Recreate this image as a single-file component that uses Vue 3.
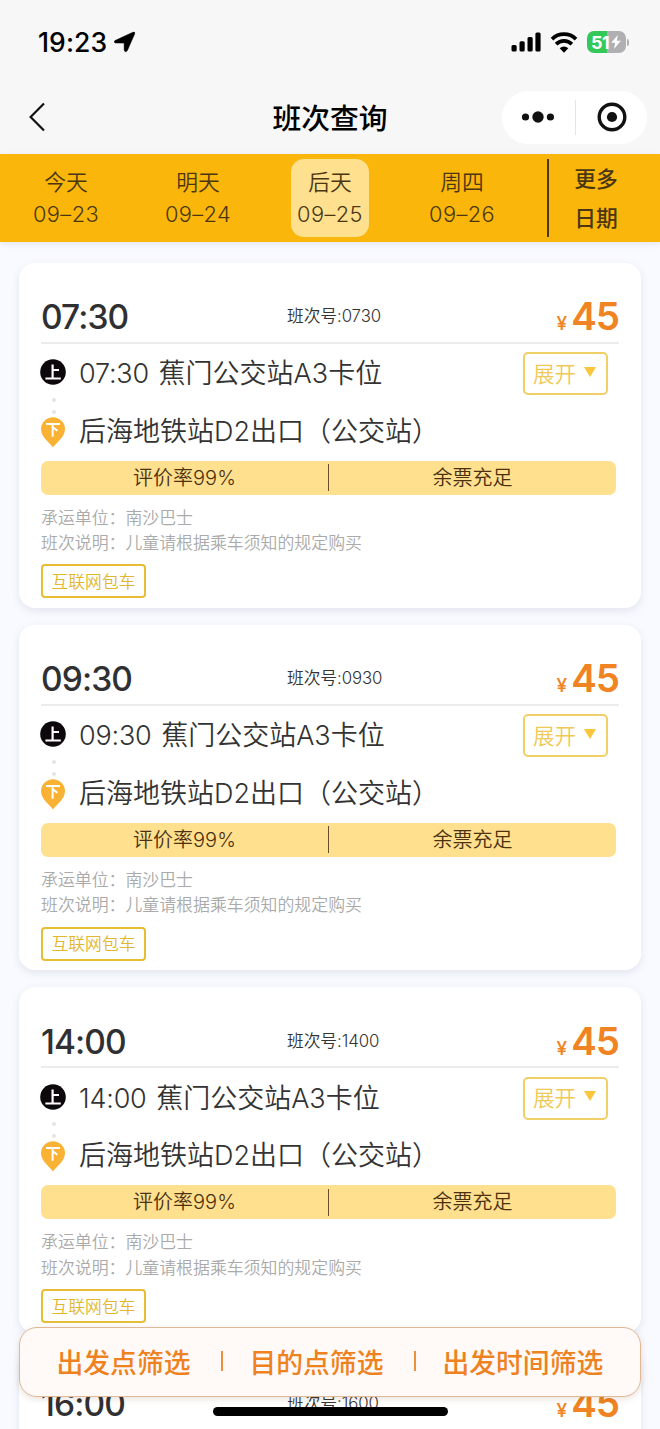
<script setup>
const days = [
  { name: '今天', date: '09–23' },
  { name: '明天', date: '09–24' },
  { name: '后天', date: '09–25', active: true },
  { name: '周四', date: '09–26' },
]
const trips = [
  { time: '07:30', no: '0730', details: true },
  { time: '09:30', no: '0930', details: true },
  { time: '14:00', no: '1400', details: true },
  { time: '16:00', no: '1600', details: false },
]
</script>

<template>
  <div class="screen">
    <header class="top">
      <div class="status">
        <span class="clock">19:23</span>
        <svg class="loc" width="22" height="22" viewBox="0 0 22 22">
          <path d="M1 9.6 18.8 1.3Q21.6.4 20.6 3.1L13.4 19.4Q11.6 22 10.2 19.4L10.1 12.5Q10.1 12.1 9.7 12.1L1.6 12Q-1 11 1 9.6Z" fill="#000" stroke="#000" stroke-width="0.5" />
        </svg>
        <svg class="signal" width="30" height="20" viewBox="0 0 30 20">
          <rect x="0.5" y="13" width="5.2" height="6.5" rx="1.5" />
          <rect x="8.5" y="9.3" width="5.2" height="10.2" rx="1.5" />
          <rect x="16.5" y="5" width="5.2" height="14.5" rx="1.5" />
          <rect x="24.4" y="0.5" width="5.2" height="19" rx="1.5" />
        </svg>
        <svg class="wifi" width="28" height="21" viewBox="0 0 28 21">
          <path d="M2 7.1a17.2 17.2 0 0 1 24 0" fill="none" stroke="#000" stroke-width="3.7" />
          <path d="M6.1 12.1a11.2 11.2 0 0 1 15.8 0" fill="none" stroke="#000" stroke-width="3.6" />
          <path d="M9.7 16.3a6 6 0 0 1 8.6 0l-4.3 4.4Z" fill="#000" />
        </svg>
        <div class="battery">
          <span>51</span>
          <svg width="10" height="14" viewBox="0 0 9 13"><path d="M6.2 0 0 7.3h3.7L2.7 13 9 5.4H5.2Z" fill="#fff" /></svg>
        </div>
        <i class="nub"></i>
      </div>
      <div class="nav">
        <svg class="back" width="18" height="30" viewBox="0 0 18 30">
          <path d="M16 1.5 2.6 15 16 28.5" fill="none" stroke="#111" stroke-width="2.2" />
        </svg>
        <h1>班次查询</h1>
        <div class="capsule">
          <svg width="34" height="14" viewBox="0 0 34 14">
            <circle cx="4.5" cy="7" r="3.6" /><circle cx="17" cy="7" r="5.7" /><circle cx="29.4" cy="7" r="3.6" />
          </svg>
          <i></i>
          <svg width="30" height="30" viewBox="0 0 30 30">
            <circle cx="15" cy="15" r="12.8" fill="none" stroke="#111" stroke-width="3.4" />
            <circle cx="15" cy="15" r="5.1" />
          </svg>
        </div>
      </div>
    </header>

    <nav class="days">
      <div v-for="d in days" :key="d.date" class="cell">
        <div class="day" :class="{ active: d.active }">
          <span>{{ d.name }}</span><span class="num">{{ d.date }}</span>
        </div>
      </div>
      <div class="more"><span>更多</span><span>日期</span></div>
    </nav>

    <main class="list">
      <article v-for="t in trips" :key="t.no" class="card">
        <div class="head">
          <b class="time">{{ t.time }}</b>
          <span class="no">班次号:{{ t.no }}</span>
          <span class="price"><small>¥</small>45</span>
        </div>
        <template v-if="t.details">
          <div class="stop first">
            <svg class="mark" width="26" height="26" viewBox="0 0 26 26">
              <circle cx="13" cy="13" r="12.8" fill="#0c080b" />
              <path d="M12.6 5.5V19.5M13 11H19M5.4 19.5H20.8" fill="none" stroke="#fff" stroke-width="2.2" />
            </svg>
            <span class="label"><span class="dep">{{ t.time }}</span> 蕉门公交站A3卡位</span>
            <button class="expand"><span>展开</span><i></i></button>
          </div>
          <div class="dots"><i></i><i></i></div>
          <div class="stop second">
            <svg class="mark" width="26" height="31" viewBox="0 0 26 31">
              <path d="M13 30.5C11 27 1 20.5 1 12.3a12 12 0 0 1 24 0C25 20.5 15 27 13 30.5Z" fill="#f9b233" />
              <path d="M6 7H20M12.6 7V19.8M13.2 10.6 17.4 13.8" fill="none" stroke="#fff" stroke-width="2" />
            </svg>
            <span class="label">后海地铁站D2出口（公交站）</span>
          </div>
          <div class="bar"><span>评价率99%</span><i></i><span>余票充足</span></div>
          <p>承运单位：南沙巴士</p>
          <p>班次说明：儿童请根据乘车须知的规定购买</p>
          <span class="tag">互联网包车</span>
        </template>
      </article>
    </main>

    <footer class="filters">
      <span>出发点筛选</span><i></i><span>目的点筛选</span><i></i><span>出发时间筛选</span>
    </footer>
    <div class="home"></div>
  </div>
</template>

<style>
html, body { margin: 0; overflow: hidden; }
</style>

<style scoped>
* { box-sizing: border-box; }
svg { flex: none; }
.screen {
  position: relative;
  width: 660px;
  height: 1429px;
  overflow: hidden;
  background: #f8faff;
  color: #333;
  font-family: Inter, "Noto Sans CJK SC", sans-serif;
  font-weight: 350;
  white-space: nowrap;
}
.top { height: 154px; background: #f7f7f7; }
.status { display: flex; align-items: center; height: 84px; padding-left: 38px; }
.clock { width: 76px; font-size: 26.5px; font-weight: 550; letter-spacing: 0.1px; color: #000; }
.loc { margin-right: 375px; }
.signal { margin-right: 9px; }
.wifi { margin-right: 9px; }
.battery {
  display: flex;
  flex: none;
  align-items: center;
  width: 39px;
  height: 22px;
  padding-left: 4px;
  border-radius: 7px;
  background: linear-gradient(90deg, #34c759 51%, #b0b0b3 51%);
  color: #fff;
}
.battery span { width: 20px; font-size: 18px; font-weight: 650; letter-spacing: -0.6px; }
.nub { flex: none; width: 2px; height: 7px; margin-left: 1px; border-radius: 0 3px 3px 0; background: #b0b0b3; }
.nav { display: grid; grid-template-columns: 158px 1fr 158px; align-items: center; height: 66px; }
.back { margin-left: 28px; }
h1 { margin: 0; padding-top: 3px; text-align: center; font-size: 28.8px; line-height: 40px; font-weight: 500; color: #000; }
.capsule {
  display: flex;
  align-items: center;
  width: 145px;
  height: 53px;
  padding-left: 19px;
  border-radius: 27px;
  background: #fff;
  fill: #111;
}
.capsule i { width: 1px; height: 35px; margin: 0 21px 0 20px; background: #e5e5e5; }
.days {
  display: flex;
  height: 88px;
  background: #fab60a;
  color: #4a3712;
  box-shadow: 0 2px 6px rgba(120, 120, 140, 0.15);
}
.cell { display: flex; justify-content: center; width: 132px; padding-top: 5px; }
.day { display: flex; flex-direction: column; align-items: center; width: 78px; height: 78px; padding-top: 7px; border-radius: 13px; font-size: 21.8px; line-height: 32px; }
.day.active { background: #fee08f; }
.num { font-size: 21.8px; letter-spacing: 0.4px; }
.cell:nth-child(4) + .more { margin-left: 19px; }
.more { display: flex; flex-direction: column; width: 96px; height: 78px; margin-top: 5px; padding-top: 1px; border-left: 2px solid #4a3712; align-items: center; font-size: 21.8px; line-height: 38.5px; font-weight: 500; }
.list { display: flex; flex-direction: column; gap: 17px; padding: 20.5px 19px 0; }
.card {
  flex: none;
  height: 345.4px;
  padding: 0 22px;
  border-radius: 16px;
  background: #fff;
  box-shadow: 0 3px 8px rgba(80, 90, 120, 0.13);
}
.head { display: grid; grid-template-columns: 246px auto 1fr; grid-template-rows: 51px; align-items: center; height: 81px; padding-top: 28px; border-bottom: 2px solid #ececec; }
.time { padding-top: 2px; font-size: 33.5px; font-weight: 550; letter-spacing: -0.9px; color: #303033; line-height: 50px; }
.no { font-size: 16.8px; line-height: 24px; letter-spacing: -0.1px; }
.price { height: 50px; text-align: right; font-size: 38.5px; font-weight: 600; line-height: 50px; color: #f08322; letter-spacing: -1px; }
.price small { margin-right: 5px; font-size: 19px; line-height: 1; font-weight: 500; }
.stop { display: flex; align-items: center; }
.first { height: 60px; }
.second { height: 33px; }
.mark { flex: none; width: 26px; margin: 0 13px 0 -1px; }
.first .mark { margin-bottom: 3px; }
.label { font-size: 27px; line-height: 40px; }
.first .label { padding-top: 1px; }
.second .label { margin-bottom: 1px; }
.dep { margin-right: 2px; letter-spacing: -0.2px; }
.expand {
  display: flex;
  align-items: center;
  width: 85px;
  height: 43px;
  margin: 0 11px 0 auto;
  padding: 0 0 3px 8px;
  border: 2px solid #f0cf68;
  border-radius: 5px;
  background: none;
  color: #efc956;
  font: inherit;
  font-size: 21.6px;
}
.expand i { margin: -1px 0 0 8px; border: 6.5px solid transparent; border-top: 10px solid #fbc63b; border-bottom: 0; }
.dots { display: flex; flex-direction: column; align-items: center; gap: 8px; width: 25px; height: 16px; margin-top: -6px; margin-bottom: 2px; }
.dots i { flex: none; width: 4px; height: 4px; border-radius: 50%; background: #e4e4e4; }
.bar {
  display: grid;
  grid-template-columns: 287px 1px 287px;
  align-items: center;
  width: 575px;
  height: 34px;
  margin-top: 12px;
  margin-bottom: 11px;
  border-radius: 7px;
  background: #fee08f;
  color: #4c300f;
  font-size: 20px;
  line-height: 32px;
  font-weight: 350;
  text-align: center;
}
.bar i { height: 27px; background: #65502c; }
p { margin: 0; font-size: 16.9px; line-height: 25.4px; color: #aaa; }
.tag {
  display: flex;
  align-items: center;
  justify-content: center;
  width: 105px;
  height: 34px;
  margin-top: 8px;
  padding-bottom: 1px;
  border: 2px solid #e7bd36;
  border-radius: 4px;
  color: #e2b72e;
  font-size: 16.8px;
}
.filters {
  position: absolute;
  left: 19px;
  top: 1327px;
  display: flex;
  align-items: center;
  width: 622px;
  height: 70px;
  padding: 0 0 2px 36.5px;
  border: 1px solid #dfb896;
  border-radius: 18px;
  background: #fffaf8;
  box-shadow: 0 2px 6px rgba(100, 60, 30, 0.15);
  color: #ee8120;
  font-size: 26.8px;
  font-weight: 500;
}
.filters i { width: 2px; height: 20px; margin: 0 26px 0 31px; background: #ee8f3c; }
.home { position: absolute; left: 213px; top: 1407px; width: 235px; height: 9px; border-radius: 5px; background: #000; }
</style>
